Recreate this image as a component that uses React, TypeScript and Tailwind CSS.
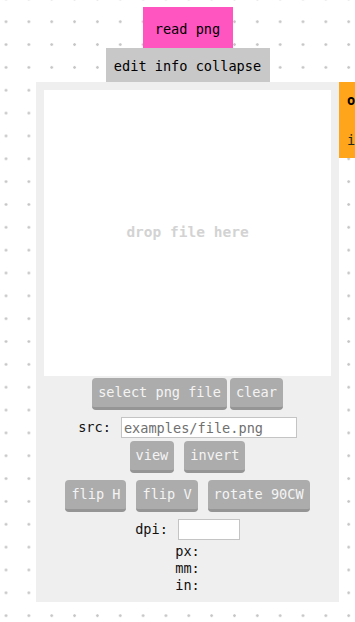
import React from "react";

const mono = { fontFamily: '"DejaVu Sans Mono", "Liberation Mono", monospace' };

function Btn({ children }: { children: React.ReactNode }) {
  return (
    <button className="h-[32px] px-[6px] rounded-[4px] bg-[#acacac] border-b-[3px] border-[#959595] text-[#f4f4f4] text-[13.6px] leading-none">
      {children}
    </button>
  );
}

export default function App() {
  return (
    <div
      className="relative w-[355px] h-[622px] overflow-hidden bg-white bg-[radial-gradient(circle,#c6c6c6_1px,transparent_1.6px)] bg-[length:22.85px_22.85px] bg-[position:-5.4px_10.3px]"
      style={mono}
    >
      {/* other node (orange), partially visible */}
      <div className="absolute left-[339px] top-[82px] w-[80px] h-[76px] bg-[#ffa51b] pl-[8px] pt-[10px] text-[13.6px] leading-[17px]">
        <div className="font-bold text-black">out</div>
        <div className="mt-[23px] text-[#1c2a1c]">in</div>
      </div>

      {/* read png node */}
      <div className="absolute left-[36px] top-[7px] w-[303px] flex flex-col items-center">
        <div className="w-[90px] h-[41px] bg-[#ff55c0] flex items-center justify-center pt-[3px] text-[13.6px] text-black">
          read png
        </div>
        <div className="w-[164px] h-[34px] bg-[#c8c8c8] flex items-center justify-center pt-[3px] text-[13.6px] text-black">
          edit info collapse
        </div>
        <div className="w-[303px] bg-[#efefef] px-[8px] pt-[8px] pb-[8px] flex flex-col items-center text-[13.6px] text-[#111]">
          <div className="w-[287px] h-[286px] bg-white flex items-center justify-center">
            <span className="font-bold text-[14.5px] text-[#d3d3d3]">drop file here</span>
          </div>
          <div className="mt-[2px] flex gap-[3px]">
            <Btn>select png file</Btn>
            <Btn>clear</Btn>
          </div>
          <div className="mt-[7px] flex items-center gap-[10px]">
            <span>src:</span>
            <input
              className="w-[176px] h-[21px] border border-[#c4c4c4] bg-white px-[2px] text-[13.6px] placeholder:text-[#707070] outline-none"
              placeholder="examples/file.png"
              style={mono}
            />
          </div>
          <div className="mt-[3px] flex gap-[10px]">
            <Btn>view</Btn>
            <Btn>invert</Btn>
          </div>
          <div className="mt-[7px] flex gap-[10px]">
            <Btn>flip H</Btn>
            <Btn>flip V</Btn>
            <Btn>rotate 90CW</Btn>
          </div>
          <div className="mt-[7px] flex items-center gap-[10px]">
            <span>dpi:</span>
            <input
              className="w-[62px] h-[21px] border border-[#c4c4c4] bg-white px-[2px] text-[13.6px] outline-none"
              style={mono}
            />
          </div>
          <div className="mt-[3px] flex flex-col items-center leading-[17px]">
            <span>px:</span>
            <span>mm:</span>
            <span>in:</span>
          </div>
        </div>
      </div>
    </div>
  );
}
